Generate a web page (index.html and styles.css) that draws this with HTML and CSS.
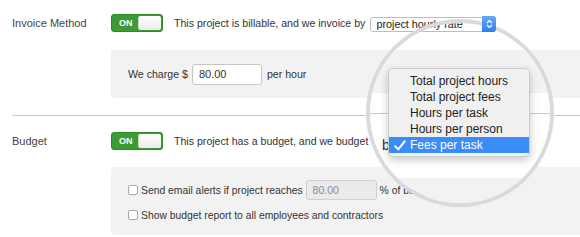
FILE: index.html
```html
<!DOCTYPE html>
<html>
<head>
<meta charset="utf-8">
<link rel="stylesheet" href="styles.css">
</head>
<body>
<div class="page">
  <div class="section">
    <div class="row">
      <div class="label">Invoice Method</div>
      <div class="toggle"><span class="on">ON</span><span class="knob"></span></div>
      <span class="text">This project is billable, and we invoice by</span>
      <div class="select">
        <span class="sel-text">project hourly rate</span>
        <span class="sel-btn"><svg width="7" height="10" viewBox="0 0 7 10"><path d="M1 4 L3.5 1.5 L6 4 M1 6 L3.5 8.5 L6 6" fill="none" stroke="#fff" stroke-width="1.2"/></svg></span>
      </div>
    </div>
    <div class="panel panel-rate">
      <span>We charge $</span>
      <div class="input">80.00</div>
      <span>per hour</span>
    </div>
  </div>
  <div class="divider"></div>
  <div class="section">
    <div class="row row-budget">
      <div class="label">Budget</div>
      <div class="toggle"><span class="on">ON</span><span class="knob"></span></div>
      <span class="text">This project has a budget, and we budget</span>
    </div>
    <div class="panel panel-budget">
      <div class="check-row">
        <span class="cb"></span>
        <span>Send email alerts if project reaches</span>
        <div class="input input-disabled">80.00</div>
        <span>% of budget</span>
      </div>
      <div class="check-row check-row-2">
        <span class="cb"></span>
        <span>Show budget report to all employees and contractors</span>
      </div>
    </div>
  </div>

  <div class="magnifier">
    <div class="mag-fill"></div>
    <div class="mag-band mag-band-1"></div>
    <div class="mag-line"></div>
    <div class="mag-band mag-band-2"></div>
    <span class="mag-by">by</span>
    <div class="menu">
      <div class="menu-item">Total project hours</div>
      <div class="menu-item">Total project fees</div>
      <div class="menu-item">Hours per task</div>
      <div class="menu-item">Hours per person</div>
      <div class="menu-item selected"><svg class="check" width="12" height="11" viewBox="0 0 12 11"><path d="M1.2 6.2 L4.3 9.4 L10.8 1.2" fill="none" stroke="#fff" stroke-width="2" stroke-linecap="round" stroke-linejoin="round"/></svg>Fees per task</div>
    </div>
  </div>
</div>
</body>
</html>
```
FILE: styles.css
```css
* { box-sizing: border-box; }
html, body { margin: 0; padding: 0; background: #fff; }
body {
  font-family: "Liberation Sans", Arial, sans-serif;
  color: #333;
  font-size: 10.6px;
}
.page {
  position: relative;
  width: 580px;
  height: 237px;
  overflow: hidden;
  padding-top: 14px;
  padding-left: 12px;
}
.row {
  display: flex;
  align-items: center;
  height: 18px;
}
.row-budget { margin-top: 16px; }
.label {
  width: 99px;
  color: #444;
  font-size: 11px;
}
.toggle {
  width: 52px;
  height: 18px;
  background: #3d9b35;
  border: 1px solid #2d8a25;
  border-radius: 3px;
  display: flex;
  align-items: center;
  padding: 0 1px;
}
.on {
  color: #fff;
  font-weight: bold;
  font-size: 9px;
  padding-left: 6px;
  width: 25px;
}
.knob {
  margin-left: auto;
  width: 24px;
  height: 14px;
  border-radius: 2px;
  background: linear-gradient(#ffffff, #ececec);
  border-left: 1px solid #c9d9c5;
}
.text {
  margin-left: 11px;
}
.select {
  position: relative;
  margin-left: 5px;
  margin-top: 2px;
  width: 126px;
  height: 15px;
  background: #fff;
  border: 1px solid #bdbdbd;
  border-radius: 3px;
  display: flex;
  align-items: center;
}
.sel-text {
  font-size: 10.8px;
  color: #222;
  padding-left: 5px;
  flex: 1;
  white-space: nowrap;
}
.sel-btn {
  position: relative;
  z-index: 5;
  width: 14px;
  height: 16px;
  margin-right: -1px;
  border-radius: 0 3px 3px 0;
  background: linear-gradient(#66a9f7, #2f7de9);
  display: flex;
  align-items: center;
  justify-content: center;
}
.panel {
  margin-left: 99px;
  background: #f2f2f2;
  border-radius: 3px 0 0 3px;
}
.panel-rate {
  margin-top: 18px;
  height: 48px;
  display: flex;
  align-items: center;
  padding-left: 17px;
}
.input {
  margin: 0 5px 0 4px;
  width: 70px;
  height: 21px;
  background: #fff;
  border: 1px solid #c6c6c6;
  border-radius: 3px;
  display: flex;
  align-items: center;
  padding-left: 6px;
  font-size: 11px;
  color: #333;
}
.divider {
  margin-top: 17px;
  height: 1px;
  background: #c9c9c9;
}
.panel-budget {
  margin-top: 17px;
  height: 68px;
  padding-top: 13px;
  padding-left: 17px;
  font-size: 10.35px;
}
.check-row {
  display: flex;
  align-items: center;
  height: 20px;
}
.check-row-2 {
  margin-top: 7px;
  height: 16px;
}
.cb {
  width: 10px;
  height: 10px;
  background: #fff;
  border: 1px solid #a9a9a9;
  border-radius: 2px;
  margin-right: 3px;
}
.input-disabled {
  margin: 0 3px 0 3px;
  width: 71px;
  height: 20px;
  background: #ebebeb;
  border-color: #cfcfcf;
  color: #8a8a8a;
  font-size: 10.5px;
}
.magnifier {
  position: absolute;
  left: 366px;
  top: 19px;
  width: 188px;
  height: 188px;
  border: 4px solid #dadada;
  border-radius: 50%;
  overflow: hidden;
  z-index: 2;
}
.mag-fill {
  position: absolute;
  left: 0;
  right: 0;
  top: 9px;
  bottom: 0;
  background: #fff;
}
.mag-band {
  position: absolute;
  left: 0;
  right: 0;
  background: #f2f2f2;
}
.mag-band-1 { top: 27px; height: 43px; }
.mag-band-2 { top: 155px; bottom: 0; }
.mag-line {
  position: absolute;
  left: 0;
  right: 0;
  top: 90px;
  height: 1px;
  background: #c9c9c9;
}
.mag-by {
  position: absolute;
  left: 12px;
  top: 114px;
  font-size: 14px;
  color: #333;
}
.menu {
  position: absolute;
  left: 18px;
  top: 45px;
  width: 142px;
  height: 89px;
  background: #f0f0f0;
  border: 1px solid #cdcdcd;
  border-radius: 5px;
  box-shadow: 0 3px 9px rgba(0, 0, 0, 0.22);
  padding-top: 4px;
  overflow: hidden;
}
.menu-item {
  position: relative;
  height: 16px;
  line-height: 16px;
  padding-left: 21px;
  font-size: 12px;
  color: #222;
}
.menu-item.selected {
  background: #3a8cf6;
  color: #fff;
}
.check {
  position: absolute;
  left: 5px;
  top: 3px;
}
```
